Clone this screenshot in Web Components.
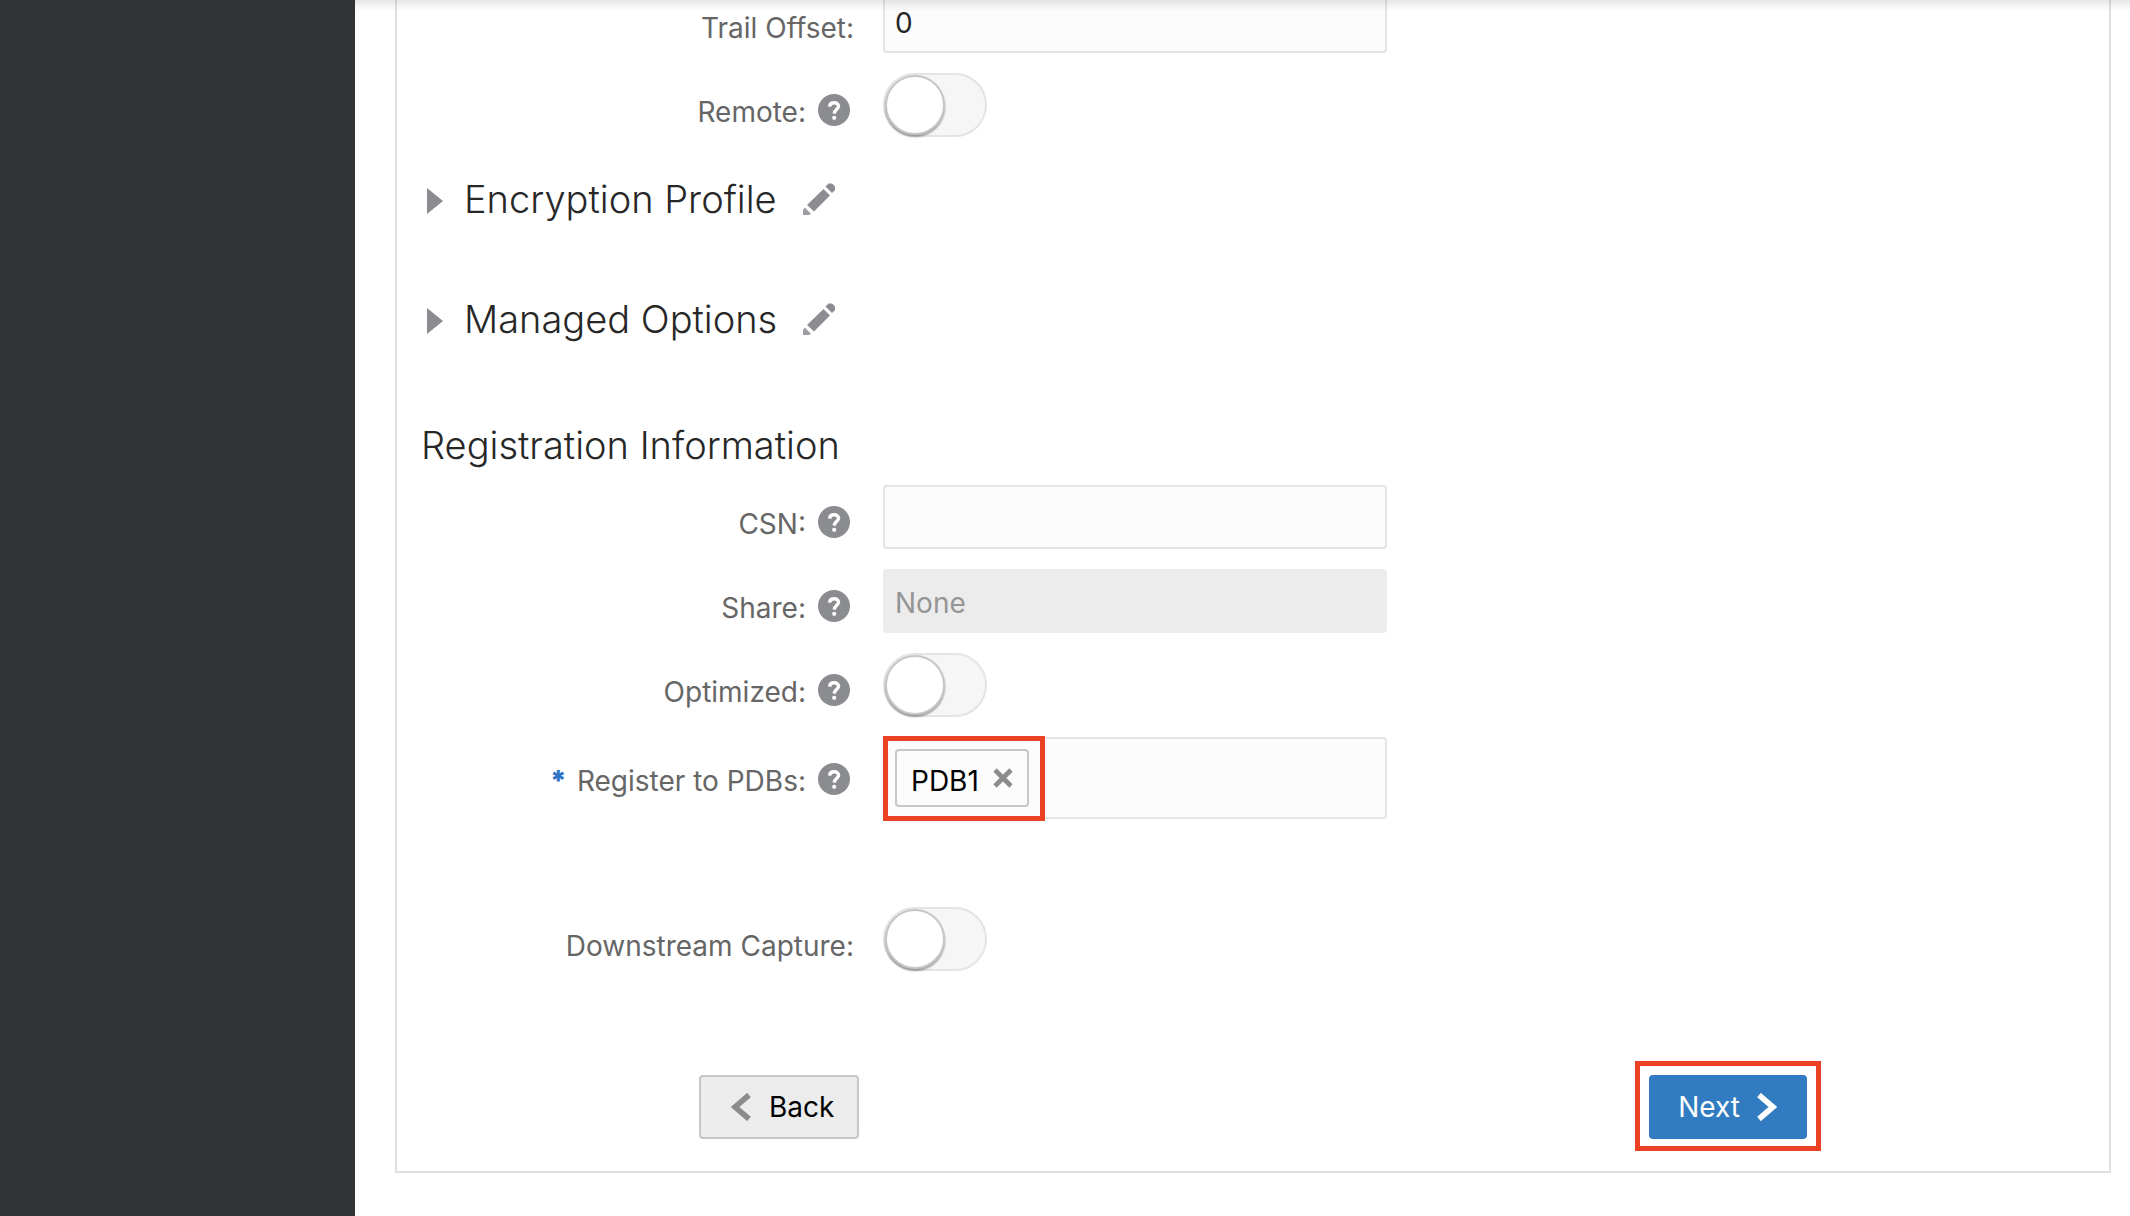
<!DOCTYPE html>
<html lang="en">
<head>
<meta charset="utf-8">
<title>Add Extract</title>
<style>
html, body { margin: 0; height: 100%; }
body { background: #fff; overflow: hidden; }
</style>
</head>
<body>
<app-shell>
  <wizard-panel>
    <form-row label="Trail Offset:" kind="text" value="0"></form-row>
    <form-row label="Remote:" kind="switch" help></form-row>
    <fold-section>Encryption Profile</fold-section>
    <fold-section>Managed Options</fold-section>
    <section-title>Registration Information</section-title>
    <form-row label="CSN:" kind="text" value="" help></form-row>
    <form-row label="Share:" kind="select" value="None" help></form-row>
    <form-row label="Optimized:" kind="switch" help></form-row>
    <form-row label="Register to PDBs:" kind="tags" value="PDB1" help required></form-row>
    <form-row label="Downstream Capture:" kind="switch" apart></form-row>
    <nav-button slot="actions" kind="back">Back</nav-button>
    <nav-button slot="actions" kind="next">Next</nav-button>
  </wizard-panel>
</app-shell>

<script>
class BaseElement extends HTMLElement {
  connectedCallback() {
    if (this.shadowRoot) return;
    this.attachShadow({ mode: 'open' }).innerHTML = this.render();
  }
}

customElements.define('app-shell', class extends BaseElement {
  render() {
    return `<style>
      :host { display: flex; height: 100vh; overflow: hidden; color: #272727;
        font: 400 28px/36px Inter, "Liberation Sans", sans-serif; }
      nav { flex: none; width: 355px; background: #323335; }
      main { flex: 1; min-width: 0; position: relative; padding: 0 19px 0 40px; }
      .shade { position: absolute; inset: 0 0 auto 0; height: 12px; pointer-events: none;
        background: linear-gradient(rgba(0,0,0,.1), rgba(0,0,0,.04) 50%, rgba(0,0,0,0)); }
    </style>
    <nav aria-label="Main"></nav>
    <main><slot></slot><div class="shade"></div></main>`;
  }
});

customElements.define('wizard-panel', class extends BaseElement {
  render() {
    return `<style>
      :host { display: block; border: 2px solid #e0e0e0; margin-top: -13px; padding-bottom: 32px; }
      form { display: flex; flex-direction: column; }
      footer { display: flex; justify-content: space-between; padding: 0 302px; margin-top: 84px; }
    </style>
    <form><slot></slot><footer><slot name="actions"></slot></footer></form>`;
  }
});

customElements.define('section-title', class extends BaseElement {
  render() {
    return `<style>
      :host { display: block; margin-top: 78px; padding: 0 24px 16px; }
      h2 { margin: 0; font-size: 38px; line-height: 48px; font-weight: 300; }
    </style><h2><slot></slot></h2>`;
  }
});

customElements.define('fold-section', class extends BaseElement {
  render() {
    return `<style>
      :host { display: flex; align-items: center; padding: 0 30px; margin-top: 18px; }
      :host(:nth-of-type(2)) { margin-top: 72px; }
      h2 { margin: 0 26px 0 0; font-size: 38px; line-height: 48px; font-weight: 300; }
      button { border: 0; background: none; padding: 0; display: block; }
      .fold { width: 37px; padding-top: 4px; }
      svg { display: block; }
    </style>
    <button type="button" class="fold" aria-label="Expand"><svg width="16" height="26" viewBox="0 0 16 26"><path d="M0 0L16 13L0 26Z" fill="#8b8c8f"/></svg></button>
    <h2><slot></slot></h2>
    <button type="button" aria-label="Edit"><svg width="32" height="32" viewBox="0 0 32 32" fill="#8b8d92"><path d="M20.500 6L27 12.500L11 28.500L4 22Z"/><path d="M22.500 3.500L25.500 .5H29L32 3.500V7L29 10Z"/><path d="M1.800 24.500L8 30.700L6 32H0V27Z" opacity=".85"/></svg></button>`;
  }
});

customElements.define('form-row', class extends BaseElement {
  control(kind, value) {
    if (kind === 'switch') return `<input id="field" type="checkbox" role="switch">`;
    if (kind === 'select') return `<select id="field" disabled><option>${value}</option></select>`;
    if (kind === 'tags') return `<div class="tags"><span class="tag"><span>${value}</span><button type="button" aria-label="Remove ${value}"><svg width="20" height="20" viewBox="0 0 20 20"><path d="M2 2L18 18M18 2L2 18" stroke="#8b8c8e" stroke-width="4.600" fill="none"/></svg></button></span><input id="field" type="text"></div>`;
    return `<input id="field" type="text" value="${value}">`;
  }
  render() {
    const help = this.hasAttribute('help') ? `<button type="button" class="help" aria-label="Help"><svg width="32" height="32" viewBox="0 0 32 32"><circle cx="16" cy="16" r="16" fill="#8b8c8f"/><path d="M11.600 12.600C11.800 9.800 13.700 8.800 16.200 8.800C18.800 8.800 20.600 10.200 20.600 12.300C20.600 15.400 16.500 15.300 16.300 19.600" fill="none" stroke="#fff" stroke-width="3.400"/><circle cx="16.200" cy="23.800" r="2.100" fill="#fff"/></svg></button>` : '';
    const star = this.hasAttribute('required') ? '<span class="star" aria-hidden="true">*</span>' : '';
    return `<style>
      :host { display: grid; grid-template-columns: 457px minmax(0, 504px); column-gap: 29px; margin-bottom: 20px; }
      :host([apart]) { margin-top: 68px; }
      .side { display: flex; justify-content: flex-end; align-items: flex-start; padding-top: 21px; color: #666; }
      :host([kind="tags"]) .side { padding-top: 26px; }
      .star { color: #2f74c6; font-weight: 900; margin-right: 10px; }
      .help { border: 0; background: none; padding: 0; margin: 0 4px 0 12px; }
      svg { display: block; }
      input, select, button { font: inherit; }
      input[type="text"], select { display: block; width: 100%; height: 64px; box-sizing: border-box; margin: 0;
        appearance: none; border: 2px solid #e4e4e4; border-radius: 4px; background: #fcfcfc; color: #272727;
        padding: 4px 10px 0; outline: 0; }
      select:disabled { border-color: #ececec; background: #ececec; color: #959595; opacity: 1; }
      input[type="checkbox"] { display: block; appearance: none; margin: 0; box-sizing: border-box; width: 104px; height: 64px;
        border: 2px solid #e4e4e4; border-radius: 32px; background: #f6f6f6; }
      input[type="checkbox"]::before { content: ""; display: block; box-sizing: border-box; width: 60px; height: 60px;
        border: 2px solid #c4c6c7; border-radius: 50%; background: #fff; box-shadow: 0 2px 2px rgba(0,0,0,.35); }
      input[type="checkbox"]:checked::before { margin-left: auto; }
      .tags { display: flex; align-items: center; box-sizing: border-box; height: 82px; padding: 0 10px;
        border: 2px solid #e4e4e4; border-radius: 4px; background: #fcfcfc; }
      .tags input[type="text"] { flex: 1; width: auto; min-width: 0; border: 0; background: none; margin-left: 20px; }
      .tag { position: relative; display: flex; align-items: center; box-sizing: border-box; height: 58px;
        padding: 6px 14px 0 14px; gap: 14px; border: 2px solid #c6c7c8; border-radius: 4px; color: #000; }
      .tag::after { content: ""; position: absolute; inset: -15px -18px -16px -14px; border: 5px solid #ed4126; pointer-events: none; }
      .tag button { border: 0; background: none; padding: 0 0 6px; }
    </style>
    <div class="side">${star}<label for="field">${this.getAttribute('label')}</label>${help}</div>
    <div>${this.control(this.getAttribute('kind'), this.getAttribute('value') || '')}</div>`;
  }
});

customElements.define('nav-button', class extends BaseElement {
  render() {
    const arrow = d => `<svg width="20" height="28" viewBox="0 0 20 28"><path d="${d}" fill="none" stroke="currentColor" stroke-width="5.600"/></svg>`;
    const back = this.getAttribute('kind') === 'back';
    return `<style>
      :host { display: block; }
      button { position: relative; display: flex; align-items: center; gap: 18px; box-sizing: border-box; height: 64px;
        padding: 0 23px 0 30px; font: inherit; border: 2px solid #c6c7c8; border-radius: 4px; background: #ececec; color: #000; }
      :host([kind="back"]) svg { color: #8b8c8e; }
      :host([kind="next"]) button { border-color: #317cc1; background: #317cc1; color: #fff; padding: 0 28px 0 27px; gap: 17px; }
      :host([kind="next"]) button::after { content: ""; position: absolute; inset: -16px -16px -14px; border: 5px solid #ed4126; pointer-events: none; }
      svg { display: block; }
    </style>
    <button type="button">${back ? arrow('M18 2L4 14L18 26') : ''}<slot></slot>${back ? '' : arrow('M2 2L16 14L2 26')}</button>`;
  }
});
</script>
</body>
</html>
